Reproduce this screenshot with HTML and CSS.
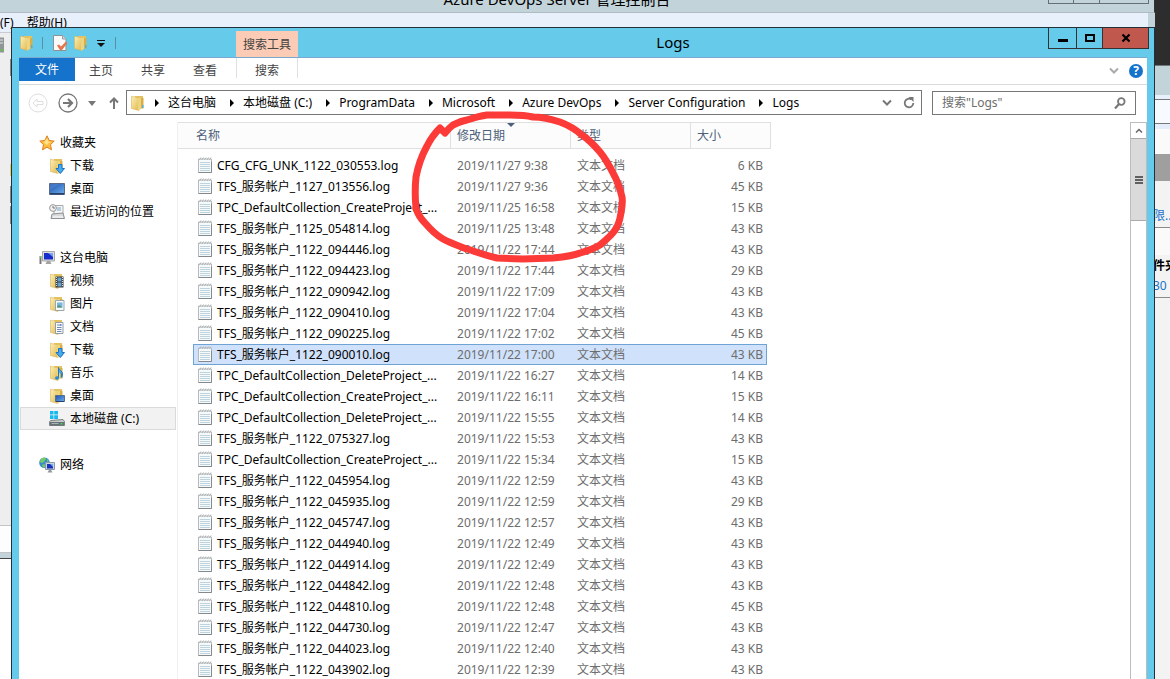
FILE: index.html
```html
<!DOCTYPE html>
<html lang="zh-CN">
<head>
<meta charset="utf-8">
<title>Logs</title>
<link rel="stylesheet" href="styles.css">
</head>
<body>
<svg class="sprites" aria-hidden="true">
  <defs>
    <linearGradient id="gold" x1="0" x2="1" y1="0" y2="1"><stop offset="0" stop-color="#fdf0b4"/><stop offset="1" stop-color="#dfb950"/></linearGradient>
    <linearGradient id="screen" x1="0" x2="1" y1="0" y2="1"><stop offset="0" stop-color="#1c4fae"/><stop offset="1" stop-color="#6fb0ec"/></linearGradient>
    <symbol id="folder" viewBox="0 0 16 16">
      <path d="M5 1h8v12H5z" fill="#e5c261"/><path d="M11 3h2.500v10.500H11z" fill="#d8ae45"/><path d="M12 10h1.500v3H12z" fill="#4db2dd"/>
      <path d="M1.500 1.200 7 2.500l2 1v12l-7.500-2z" fill="url(#gold)" stroke="#d6b45c" stroke-width=".6"/>
      <path d="M8 3h3v11l-2.500 1.500H8z" fill="#eed381"/>
    </symbol>
    <symbol id="log" viewBox="0 0 14 16">
      <path d="M.5 2h13v13.500H.5z" fill="#f7fafb" stroke="#b4babd"/>
      <path d="M2 5.500h10M2 7.500h10M2 9.500h10M2 11.500h10M2 13.500h10" stroke="#bdd3dd"/>
      <path d="m1.500 3 1.500-2.500M4 3 5.500.5M6.500 3 8 .5M9 3 10.500.5M11.500 3 13 .5" fill="none" stroke="#a8abad" stroke-width=".9"/>
      <path d="M.5 15.500h13v-11" fill="none" stroke="#85898b"/>
    </symbol>
    <symbol id="star" viewBox="0 0 16 16"><path d="m8 .8 2.200 4.700 5 .6-3.700 3.500 1 5.200L8 12.200 3.500 14.800l1-5.200L.8 6.100l5-.6z" fill="#ffbf3c" stroke="#df7e25"/><path d="m8 3 1.300 3.500 3 .5-3 1L8 10 5 7.500z" fill="#ffe48c"/></symbol>
    <symbol id="download" viewBox="0 0 16 16"><use href="#folder"/><path d="M9.500 6.500h3.500v4h2.500L11.300 15.500 7 10.500h2.500z" fill="#45aaf0" stroke="#1d73bd"/></symbol>
    <symbol id="desktop" viewBox="0 0 16 16"><path d="M.5 2.500h15v11H.5z" fill="url(#screen)" stroke="#5b6b86"/><path d="M1 12h14v1.500H1z" fill="#273f6b"/><path d="m1 3 9 0-9 6z" fill="#5e90d6" opacity=".5"/></symbol>
    <symbol id="recent" viewBox="0 0 16 16"><path d="M5 1.500h9v9H5z" fill="#f5f5f5" stroke="#a9a9a9"/><path d="M8 4h4M8 6h4" stroke="#77a4c8"/><path d="m3 10 11-1 1.500 5.500H2z" fill="#d8dadb" stroke="#8d9295"/><path d="M4 13h10" stroke="#fff"/><circle cx="4" cy="4" r="3.400" fill="#f2f2f2" stroke="#999"/><path d="M4 2v2h2" fill="none" stroke="#777"/></symbol>
    <symbol id="pc" viewBox="0 0 16 16"><path d="M.5 6h2v8h-2z" fill="#777" /><path d="M1 6h1v2H1z" fill="#48d348"/><path d="M3.500 1.500h12v9.500h-12z" fill="#ddd" stroke="#a7a7a7"/><path d="M5 3h9v6.500H5z" fill="#162dc9"/><path d="M9 3h5v4z" fill="#7c9ef2"/><path d="M8 11h3l1.500 3h-6z" fill="#a3a3a3"/></symbol>
    <symbol id="video" viewBox="0 0 16 16"><use href="#folder"/><path d="M6.500 3.500h8v11h-8z" fill="#373d42"/><path d="M8.500 4.500h4v4h-4zM8.500 9.500h4v4h-4z" fill="#6aa1cb"/><path d="M7.500 4v10M13.500 4v10" stroke="#ddd" stroke-dasharray="1 1"/></symbol>
    <symbol id="image" viewBox="0 0 16 16"><use href="#folder"/><path d="M6.500 4.500h8.500v10H6.500z" fill="#f7faf9" stroke="#9ba7aa"/><path d="M8 6.500h5.500v5H8z" fill="#76b7df"/><path d="m8 11 2-2 3.500 2.500H8z" fill="#4f9073"/></symbol>
    <symbol id="document" viewBox="0 0 16 16"><use href="#folder"/><path d="M6.500 3.500H14v11H6.500z" fill="#fafafa" stroke="#929da6"/><path d="M8 6h2M8 8.500h4.500M8 10.500h4.500M8 12.500h4.500" stroke="#6e8bb5"/><path d="M10.500 5h2v2h-2z" fill="#6b87d7"/></symbol>
    <symbol id="music" viewBox="0 0 16 16"><use href="#folder"/><path d="M9.500 13V2.500c0 3 4.500 3 4 7 0 1.500-1 2.500-1 2.500 1-3-1-4.500-2-5" fill="#53b4f1" stroke="#1e78c5"/><ellipse cx="8" cy="13" rx="2" ry="1.700" fill="#258ade"/></symbol>
    <symbol id="folder-desktop" viewBox="0 0 16 16"><use href="#folder"/><path d="M6.500 7.500h9v6h-9z" fill="url(#screen)" stroke="#55718f"/><path d="M7 13.500h8" stroke="#243f6d"/></symbol>
    <symbol id="drive" viewBox="0 0 16 16"><path d="M1 0h3.500v3.500H1zM5.200 0H9v3.500H5.200zM1 4.200h3.500V8H1zM5.200 4.200H9V8H5.200z" fill="#18b9ee"/><path d="m2 9.500 12-1 1.500 2v4H.5v-4z" fill="#c5caca" stroke="#7a8283"/><path d="M1 11h14v3.500H1z" fill="#667276"/><path d="M11.500 12h2v1.500h-2z" fill="#46d55a"/><path d="M2.500 12.500h7" stroke="#a5b4b6"/></symbol>
    <symbol id="network" viewBox="0 0 16 16"><circle cx="5.500" cy="5.800" r="5.300" fill="#358dce"/><path d="M2 2c2-2 5-1 5 0L5 5 3 6 .7 5zM4 7l3 1-2 3-2-2zM8 2l2 2-2 1z" fill="#74ca63"/><path d="M6.500 5.500h9v7h-9z" fill="#ccd6de" stroke="#8c9aa6"/><path d="M8 7h6v4.500H8z" fill="#1832be"/><path d="M11 7h3v3z" fill="#7ba9ef"/><path d="M10 13h2l1.500 2.500h-5z" fill="#9299a0"/></symbol>
    <symbol id="props" viewBox="0 0 16 16"><path d="M1.500.5h9l3.500 3.500v11.500H1.500z" fill="#fafafa" stroke="#8f9292"/><path d="M10.500.5V4H14" fill="#d5d9da" stroke="#9a9d9d"/><path d="m5 10.500 2-1 2 2 5-5 1.500 1.500-5.500 7H8z" fill="#e5744c"/></symbol>
    <symbol id="chevron" viewBox="0 0 10 8"><path d="m1 1.500 4 4 4-4" fill="none" stroke="currentColor" stroke-width="2"/></symbol>
  </defs>
</svg>

<div class="desktop">
  <div class="backdrop">
    <section class="console">
      <header class="console-title"><span>Azure DevOps Server 管理控制台</span><div class="console-controls"><i></i><i></i><i></i></div></header>
      <nav class="console-menu"><span>(F)</span><span>帮助(H)</span></nav>
      <div class="console-pane"><svg class="server" viewBox="0 0 5 16"><path d="M0 .5h4v15H0z" fill="#909698"/><path d="M0 3h3M0 6h3" stroke="#dfe3e4"/><path d="M1 12h2v2H1z" fill="#59cd37"/></svg></div>
      <div class="console-status"></div>
      <div class="console-edge"></div>
    </section>
    <aside class="strip">
      <div class="strip-dark"></div>
      <div class="strip-title"></div>
      <div class="strip-field"></div>
      <div class="strip-head"></div>
      <div class="strip-bar"></div>
      <div class="strip-link"><a href="#">限...</a></div>
      <div class="strip-files"><b>件夹</b><a href="#">30</a></div>
    </aside>
  </div>

  <main class="window">
    <header class="titlebar">
      <div class="quick">
        <svg class="icon"><use href="#folder"/></svg><i class="sep"></i>
        <button aria-label="属性"><svg class="icon"><use href="#props"/></svg></button>
        <button aria-label="新建文件夹"><svg class="icon"><use href="#folder"/></svg></button>
        <button aria-label="自定义"><svg class="custom" viewBox="0 0 8 7"><path d="M0 .5h8" stroke="#111"/><path d="M0 3h8L4 7z" fill="#111"/></svg></button><i class="sep"></i>
      </div>
      <div class="context">搜索工具</div>
      <h1>Logs</h1>
      <div class="controls">
        <button class="min" aria-label="最小化"><svg viewBox="0 0 10 10"><path d="M0 6h10v3H0z"/></svg></button>
        <button class="max" aria-label="最大化"><svg viewBox="0 0 10 10"><path d="M1 2h8v6H1z" fill="none" stroke="#000" stroke-width="2"/></svg></button>
        <button class="close" aria-label="关闭"><svg viewBox="0 0 10 10"><path d="m1.500 1.500 7 7m0-7-7 7" stroke="#000" stroke-width="2.200"/></svg></button>
      </div>
    </header>
    <div class="body">
      <nav class="ribbon">
        <button class="file">文件</button><button class="tab">主页</button><button class="tab">共享</button><button class="tab">查看</button><button class="tab found">搜索</button>
        <div class="ribbon-tools"><svg class="chev pale"><use href="#chevron"/></svg><button class="help" aria-label="帮助">?</button></div>
      </nav>
      <div class="location">
        <div class="history">
          <button aria-label="后退"><svg class="round" viewBox="0 0 20 20" fill="none" stroke="#dedede"><circle cx="10" cy="10" r="9"/><path d="m5 10 4-4v2.500h6v3H9V14z"/></svg></button>
          <button aria-label="前进"><svg class="round" viewBox="0 0 20 20" fill="none" stroke="#777"><circle cx="10" cy="10" r="9" stroke-width="1.300"/><path d="M5 10h9M10 6l4 4-4 4" stroke-width="2.200"/></svg></button>
          <button aria-label="最近位置"><svg class="down" viewBox="0 0 8 5"><path d="M0 0h8L4 5z" fill="#777"/></svg></button>
          <button aria-label="上移"><svg class="up" viewBox="0 0 10 12"><path d="M5 12V2M1 5.500 5 1.500l4 4" fill="none" stroke="#777" stroke-width="2"/></svg></button>
        </div>
        <div class="address">
          <svg class="icon"><use href="#folder"/></svg>
          <ol class="crumbs"><li>这台电脑</li><li>本地磁盘 (C:)</li><li>ProgramData</li><li>Microsoft</li><li>Azure DevOps</li><li>Server Configuration</li><li>Logs</li></ol>
          <svg class="chev"><use href="#chevron"/></svg>
          <button aria-label="刷新"><svg class="refresh" viewBox="0 0 12 12"><path d="M8.500 2.500A4.300 4.300 0 1 0 10.300 6" fill="none" stroke="#777" stroke-width="1.800"/><path d="M5.500 0h5v5z" fill="#777"/></svg></button>
        </div>
        <label class="search"><input type="text" placeholder='搜索"Logs"' aria-label="搜索"><svg viewBox="0 0 12 12"><circle cx="7.300" cy="4.500" r="3.300" fill="none" stroke="#777" stroke-width="1.800"/><path d="m5 7-4 4.500" stroke="#777" stroke-width="2.200"/></svg></label>
      </div>
      <div class="content">
        <nav class="tree">
          <ul>
            <li class="root"><svg class="icon"><use href="#star"/></svg>收藏夹</li>
            <li><svg class="icon"><use href="#download"/></svg>下载</li>
            <li><svg class="icon"><use href="#desktop"/></svg>桌面</li>
            <li><svg class="icon"><use href="#recent"/></svg>最近访问的位置</li>
          </ul>
          <ul>
            <li class="root"><svg class="icon"><use href="#pc"/></svg>这台电脑</li>
            <li><svg class="icon"><use href="#video"/></svg>视频</li>
            <li><svg class="icon"><use href="#image"/></svg>图片</li>
            <li><svg class="icon"><use href="#document"/></svg>文档</li>
            <li><svg class="icon"><use href="#download"/></svg>下载</li>
            <li><svg class="icon"><use href="#music"/></svg>音乐</li>
            <li><svg class="icon"><use href="#folder-desktop"/></svg>桌面</li>
            <li class="current"><svg class="icon"><use href="#drive"/></svg>本地磁盘 (C:)</li>
          </ul>
          <ul>
            <li class="root"><svg class="icon"><use href="#network"/></svg>网络</li>
          </ul>
        </nav>
        <div class="list">
          <table>
            <colgroup><col class="c-gap"><col class="c-name"><col class="c-date"><col class="c-type"><col class="c-size"><col class="c-end"></colgroup>
            <thead><tr><th colspan="2" class="h-name">名称</th><th class="sorted">修改日期</th><th>类型</th><th colspan="2">大小</th></tr></thead>
            <tbody>
              <tr><td></td><td><svg class="log"><use href="#log"/></svg>CFG_CFG_UNK_1122_030553.log</td><td>2019/11/27 9:38</td><td>文本文档</td><td>6 KB</td><td></td></tr>
              <tr><td></td><td><svg class="log"><use href="#log"/></svg>TFS_服务帐户_1127_013556.log</td><td>2019/11/27 9:36</td><td>文本文档</td><td>45 KB</td><td></td></tr>
              <tr><td></td><td><svg class="log"><use href="#log"/></svg>TPC_DefaultCollection_CreateProject_...</td><td>2019/11/25 16:58</td><td>文本文档</td><td>15 KB</td><td></td></tr>
              <tr><td></td><td><svg class="log"><use href="#log"/></svg>TFS_服务帐户_1125_054814.log</td><td>2019/11/25 13:48</td><td>文本文档</td><td>43 KB</td><td></td></tr>
              <tr><td></td><td><svg class="log"><use href="#log"/></svg>TFS_服务帐户_1122_094446.log</td><td>2019/11/22 17:44</td><td>文本文档</td><td>43 KB</td><td></td></tr>
              <tr><td></td><td><svg class="log"><use href="#log"/></svg>TFS_服务帐户_1122_094423.log</td><td>2019/11/22 17:44</td><td>文本文档</td><td>29 KB</td><td></td></tr>
              <tr><td></td><td><svg class="log"><use href="#log"/></svg>TFS_服务帐户_1122_090942.log</td><td>2019/11/22 17:09</td><td>文本文档</td><td>43 KB</td><td></td></tr>
              <tr><td></td><td><svg class="log"><use href="#log"/></svg>TFS_服务帐户_1122_090410.log</td><td>2019/11/22 17:04</td><td>文本文档</td><td>43 KB</td><td></td></tr>
              <tr><td></td><td><svg class="log"><use href="#log"/></svg>TFS_服务帐户_1122_090225.log</td><td>2019/11/22 17:02</td><td>文本文档</td><td>45 KB</td><td></td></tr>
              <tr class="selected"><td></td><td><svg class="log"><use href="#log"/></svg>TFS_服务帐户_1122_090010.log</td><td>2019/11/22 17:00</td><td>文本文档</td><td>43 KB</td><td></td></tr>
              <tr><td></td><td><svg class="log"><use href="#log"/></svg>TPC_DefaultCollection_DeleteProject_...</td><td>2019/11/22 16:27</td><td>文本文档</td><td>14 KB</td><td></td></tr>
              <tr><td></td><td><svg class="log"><use href="#log"/></svg>TPC_DefaultCollection_CreateProject_...</td><td>2019/11/22 16:11</td><td>文本文档</td><td>15 KB</td><td></td></tr>
              <tr><td></td><td><svg class="log"><use href="#log"/></svg>TPC_DefaultCollection_DeleteProject_...</td><td>2019/11/22 15:55</td><td>文本文档</td><td>14 KB</td><td></td></tr>
              <tr><td></td><td><svg class="log"><use href="#log"/></svg>TFS_服务帐户_1122_075327.log</td><td>2019/11/22 15:53</td><td>文本文档</td><td>43 KB</td><td></td></tr>
              <tr><td></td><td><svg class="log"><use href="#log"/></svg>TPC_DefaultCollection_CreateProject_...</td><td>2019/11/22 15:34</td><td>文本文档</td><td>15 KB</td><td></td></tr>
              <tr><td></td><td><svg class="log"><use href="#log"/></svg>TFS_服务帐户_1122_045954.log</td><td>2019/11/22 12:59</td><td>文本文档</td><td>43 KB</td><td></td></tr>
              <tr><td></td><td><svg class="log"><use href="#log"/></svg>TFS_服务帐户_1122_045935.log</td><td>2019/11/22 12:59</td><td>文本文档</td><td>29 KB</td><td></td></tr>
              <tr><td></td><td><svg class="log"><use href="#log"/></svg>TFS_服务帐户_1122_045747.log</td><td>2019/11/22 12:57</td><td>文本文档</td><td>43 KB</td><td></td></tr>
              <tr><td></td><td><svg class="log"><use href="#log"/></svg>TFS_服务帐户_1122_044940.log</td><td>2019/11/22 12:49</td><td>文本文档</td><td>43 KB</td><td></td></tr>
              <tr><td></td><td><svg class="log"><use href="#log"/></svg>TFS_服务帐户_1122_044914.log</td><td>2019/11/22 12:49</td><td>文本文档</td><td>43 KB</td><td></td></tr>
              <tr><td></td><td><svg class="log"><use href="#log"/></svg>TFS_服务帐户_1122_044842.log</td><td>2019/11/22 12:48</td><td>文本文档</td><td>43 KB</td><td></td></tr>
              <tr><td></td><td><svg class="log"><use href="#log"/></svg>TFS_服务帐户_1122_044810.log</td><td>2019/11/22 12:48</td><td>文本文档</td><td>45 KB</td><td></td></tr>
              <tr><td></td><td><svg class="log"><use href="#log"/></svg>TFS_服务帐户_1122_044730.log</td><td>2019/11/22 12:47</td><td>文本文档</td><td>43 KB</td><td></td></tr>
              <tr><td></td><td><svg class="log"><use href="#log"/></svg>TFS_服务帐户_1122_044023.log</td><td>2019/11/22 12:40</td><td>文本文档</td><td>43 KB</td><td></td></tr>
              <tr><td></td><td><svg class="log"><use href="#log"/></svg>TFS_服务帐户_1122_043902.log</td><td>2019/11/22 12:39</td><td>文本文档</td><td>43 KB</td><td></td></tr>
            </tbody>
          </table>
          <svg class="marker" viewBox="410 110 220 156" aria-hidden="true"><path d="M445 133 440 128C434 134 430 140 427 146C421 157 418 166 416 177C415 187 415 198 416 208C418 215 421 219 425 223C431 230 436 235 443 239C450 243 459 246 467 249C477 252 487 256 497 258L523 259L553 258C563 257 573 256 580 253C587 251 595 248 600 245C606 240 612 235 615 230C619 225 620 219 621 213C622 207 623 202 622 197C620 188 617 180 613 173C609 165 605 158 600 152C594 145 588 139 582 135C575 129 568 125 560 122C551 119 542 117 533 117C525 115 518 115 510 115H487C480 116 473 118 467 120C461 121 457 123 453 125Q449 128 445 133"/></svg>
        </div>
        <div class="scroll"><button aria-label="向上滚动"><svg viewBox="0 0 8 6"><path d="m1 4.500 3-3 3 3" fill="none" stroke="#666" stroke-width="1.500"/></svg></button><div class="thumb"><svg viewBox="0 0 8 8"><path d="M0 1h8M0 4h8M0 7h8" stroke="#606060" stroke-width="2"/></svg></div></div>
      </div>
    </div>
  </main>
</div>
</body>
</html>
```

FILE: styles.css
```css
* { box-sizing: border-box; }
body { margin: 0; font: 12px/20px "Noto Sans", "Noto Sans CJK SC", sans-serif; color: #000; }
button { margin: 0; padding: 0; border: 0; background: none; font: inherit; color: inherit; display: flex; align-items: center; justify-content: center; }
ul, ol { margin: 0; padding: 0; list-style: none; }
a { color: #1673cb; text-decoration: none; }
svg { display: block; flex: none; }
.sprites { position: absolute; width: 0; height: 0; }
.icon { width: 16px; height: 16px; }

.desktop { position: relative; height: 100vh; overflow: hidden; background: #fff; }

.backdrop { display: flex; height: 100%; }
.console { flex: 1; min-width: 0; display: flex; flex-direction: column; }
.console-title { height: 13px; flex: none; display: flex; align-items: flex-end; justify-content: center; position: relative; background: #c2d4da; border-bottom: 1px solid #b0bac3; border-right: 1px solid #333; font-size: 15px; line-height: 24px; }
.console-title span { padding: 0 40px 1px 0; white-space: nowrap; }
.console-controls { position: absolute; right: 5px; top: 0; display: flex; width: 101px; height: 4px; border: 1px solid #666f75; border-top: 0; }
.console-controls i { flex: 1; border-right: 1px solid #666f75; }
.console-controls i:last-child { flex: 2; border: 0; }
.console-menu { height: 20px; flex: none; display: flex; gap: 13px; background: #e8f0fb; border-right: 7px solid #c2d4da; border-bottom: 1px solid #c8ccd2; }
.console-pane { height: 492px; flex: none; padding-top: 4px; background: linear-gradient(#888 0 17px, #eee 17px 105px, #e8cf5a 105px 117px, #eee 117px 127px, #888 127px 144px, #eee 144px 147px, #888 147px 165px, #eee 165px) 10px 26px / 1px 100% no-repeat #eee; }
.server { width: 5px; height: 16px; }
.console-status { height: 28px; flex: none; border-top: 1px solid #c3c3c3; border-bottom: 1px solid #c3c3c3; background: #fdfdfd; }
.console-edge { height: 6px; flex: none; background: #c2d4da; border-bottom: 1px solid #444; }

.strip { width: 15px; overflow: hidden; background: #f3f3f3; white-space: nowrap; text-indent: -2px; }
.strip-dark { height: 66px; background: #2d2d2d; border-bottom: 1px solid #6f777b; }
.strip-title { height: 33px; background: #c2d4da; border-bottom: 4px solid #e8f0fb; }
.strip-field { height: 25px; background: #f7fafe; border: solid #777; border-width: 1px 0; }
.strip-head { height: 30px; background: #fafafa; border-top: 5px solid #e4eefb; }
.strip-bar { height: 27px; background: #9f9f9f; }
.strip-link { height: 47px; padding-top: 25px; border-bottom: 1px solid #8a8a8a; }
.strip-files { height: 70px; padding-top: 28px; border-bottom: 1px solid #8a8a8a; background: linear-gradient(#fafafa 27px, #f3f3f3 27px); }
.strip-files a, .strip-files b { display: block; }

.window { position: absolute; top: 27px; left: 11px; right: 15px; bottom: -1px; display: flex; flex-direction: column; border: 1px solid #22303a; background: #66cbea; }
.titlebar { height: 29px; flex: none; display: flex; align-items: flex-start; }
.quick { width: 224px; height: 30px; padding-left: 7px; display: flex; align-items: center; gap: 5px; }
.quick .sep { width: 1px; height: 12px; margin: 0 4px 0 2px; background: #5a8ea6; }
.custom { width: 8px; height: 7px; margin: 0 3px; }
.context { width: 62px; height: 26px; margin-top: 3px; line-height: 27px; text-align: center; background: #fbcbb5; color: #444; }
.titlebar h1 { flex: 1; margin: 0; font-size: 15px; font-weight: 400; line-height: 29px; text-align: center; }
.controls { display: flex; height: 21px; margin-right: 5px; border: 1px solid #333; border-top: 0; }
.controls button { border-right: 1px solid #333; }
.controls svg { width: 10px; height: 10px; }
.controls .min { width: 28px; }
.controls .max { width: 26px; }
.controls .close { width: 45px; border: 0; background: #c1584d; }

.body { flex: 1; min-height: 0; margin: 0 7px; display: flex; flex-direction: column; background: #fff; border-top: 1px solid #7aa8cf; }
.ribbon { height: 27px; flex: none; display: flex; align-items: flex-start; border-bottom: 1px solid #dadada; color: #444; }
.file { width: 56px; height: 23px; background: #1673cb; color: #fff; }
.tab { width: 52px; height: 26px; }
.found { width: 62px; margin-left: 5px; border: solid #e0e0e0; border-width: 0 1px; height: 20px; padding-top: 6px; }
.ribbon-tools { margin-left: auto; padding-right: 4px; height: 26px; display: flex; align-items: center; gap: 10px; }
.chev { width: 10px; height: 8px; color: #777; }
.pale { color: #aaa; }
.help { width: 14px; height: 14px; border-radius: 50%; background: #1673cb; color: #fff; font-weight: 700; line-height: 14px; }

.location { height: 37px; flex: none; display: flex; align-items: flex-start; padding: 5px 11px 0 9px; }
.history { width: 98px; height: 26px; display: flex; align-items: center; gap: 10px; }
.round { width: 20px; height: 20px; }
.down { width: 8px; height: 5px; }
.up { width: 10px; height: 12px; margin-left: 3px; }
.address { flex: 1; min-width: 0; height: 25px; display: flex; align-items: center; border: 1px solid #777; padding: 0 6px 0 3px; line-height: 22px; }
.crumbs { flex: 1; min-width: 0; display: flex; overflow: hidden; white-space: nowrap; }
.crumbs li { display: flex; align-items: center; }
.crumbs li::before { content: ""; margin: 0 9px 0 14px; border: solid transparent; border-width: 4px 0 4px 4px; border-left-color: #000; }
.crumbs li:first-child::before { margin-left: 9px; }
.address button { width: 12px; margin-left: 11px; }
.refresh { width: 12px; height: 12px; }
.search { width: 204px; height: 24px; margin: 1px 0 0 10px; padding: 0 9px; display: flex; align-items: center; border: 1px solid #777; }
.search input { flex: 1; min-width: 0; padding: 0; border: 0; outline: 0; background: none; font: inherit; }
.search input::placeholder { color: #6d6d6d; opacity: 1; }
.search svg { width: 12px; height: 12px; }

.content { flex: 1; min-height: 0; display: flex; }
.tree { width: 159px; flex: none; padding: 9px 1px 0; border-right: 1px solid #f0f0f0; white-space: nowrap; }
.tree ul { margin-bottom: 23px; }
.tree li { height: 23px; padding-left: 29px; display: flex; align-items: center; gap: 5px; }
.tree .root { padding-left: 19px; }
.tree .current { padding-left: 28px; border: 1px solid #dadada; background: #f2f2f2; }

.list { position: relative; flex: 1; min-width: 0; }
table { width: 593px; table-layout: fixed; border-collapse: separate; border-spacing: 0; }
.c-gap { width: 15px; }
.c-name { width: 258px; }
.c-date, .c-type { width: 120px; }
.c-size { width: 76px; }
.c-end { width: 4px; }
th { position: relative; height: 27px; padding: 0 6px; border: solid #e0e0e0; border-width: 1px 1px 1px 0; background: #fcfcfc; color: #4c607a; font-weight: 400; text-align: left; }
.h-name { padding-left: 18px; }
.sorted::after { content: ""; position: absolute; top: 0; left: 56px; border: solid transparent; border-width: 4px 4px 0; border-top-color: #4c607a; }
tbody::before { content: ""; display: block; height: 6px; }
td { height: 21px; padding: 0 0 0 6px; color: #6d6d6d; line-height: 19px; white-space: nowrap; }
td:nth-child(1), td:nth-child(6) { padding: 0; }
td:nth-child(2) { padding-left: 5px; color: #000; }
td:nth-child(5) { padding: 0 4px 0 0; text-align: right; }
.selected td:not(:first-child, :last-child) { background: #d0e2fb; box-shadow: inset 0 1px #6fa3d4, inset 0 -1px #6fa3d4; }
.selected td:nth-child(2):not(:last-child) { box-shadow: inset 0 1px #6fa3d4, inset 0 -1px #6fa3d4, inset 1px 0 #6fa3d4; }
.selected td:nth-child(5):not(:first-child) { box-shadow: inset 0 1px #6fa3d4, inset 0 -1px #6fa3d4, inset -1px 0 #6fa3d4; }
.log { display: inline-block; width: 14px; height: 16px; margin-right: 5px; vertical-align: -3px; }
.marker { position: absolute; left: 232px; top: -12px; width: 220px; height: 156px; }
.marker path { fill: none; stroke: #fc3a38; stroke-width: 7; stroke-linejoin: round; stroke-linecap: round; }

.scroll { width: 17px; flex: none; border: solid #bdbdbd; border-width: 1px 1px 0; }
.scroll button { width: 100%; height: 16px; border-bottom: 1px solid #aaa; }
.scroll button svg { width: 8px; height: 6px; }
.thumb { height: 82px; display: flex; align-items: center; justify-content: center; background: #dadada; border-bottom: 1px solid #aaa; }
.thumb svg { width: 8px; height: 8px; }
```
